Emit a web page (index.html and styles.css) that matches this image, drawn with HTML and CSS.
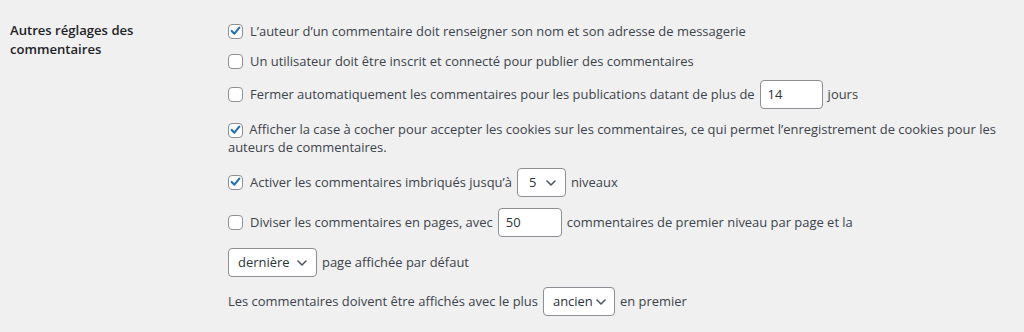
FILE: index.html
```html
<!DOCTYPE html>
<html lang="fr">
<head>
    <meta charset="UTF-8">
    <meta name="viewport" content="width=device-width, initial-scale=1.0">
    <title>Réglages des commentaires</title>
    <link rel="stylesheet" href="styles.css">
</head>
<body>
    <div class="settings">
        <div class="label">Autres réglages des commentaires</div>
        <div class="fields">
            <div class="opt r1">
                <span class="cb checked"><svg viewBox="0 0 14 14" width="14" height="14"><path d="M2.9 7 L5.8 9.9 L11.1 3.3" fill="none" stroke="#2271b1" stroke-width="2.3" stroke-linecap="round" stroke-linejoin="round"/></svg></span>
                L’auteur d’un commentaire doit renseigner son nom et son adresse de messagerie
            </div>
            <div class="opt r2">
                <span class="cb"></span>
                Un utilisateur doit être inscrit et connecté pour publier des commentaires
            </div>
            <div class="opt ctl r3">
                <span class="cb"></span>
                Fermer automatiquement les commentaires pour les publications datant de plus de
                <span class="input w63">14</span>
                jours
            </div>
            <div class="wrap r4">
                <span class="cb checked"><svg viewBox="0 0 14 14" width="14" height="14"><path d="M2.9 7 L5.8 9.9 L11.1 3.3" fill="none" stroke="#2271b1" stroke-width="2.3" stroke-linecap="round" stroke-linejoin="round"/></svg></span>
                Afficher la case à cocher pour accepter les cookies sur les commentaires, ce qui permet l’enregistrement de cookies pour les auteurs de commentaires.
            </div>
            <div class="opt ctl r5">
                <span class="cb checked"><svg viewBox="0 0 14 14" width="14" height="14"><path d="M2.9 7 L5.8 9.9 L11.1 3.3" fill="none" stroke="#2271b1" stroke-width="2.3" stroke-linecap="round" stroke-linejoin="round"/></svg></span>
                Activer les commentaires imbriqués jusqu’à
                <span class="select w49">5<svg class="chev" viewBox="0 0 10 6" width="10" height="6"><path d="M1 1 L5 5 L9 1" fill="none" stroke="#50575e" stroke-width="1.6" stroke-linecap="round" stroke-linejoin="round"/></svg></span>
                niveaux
            </div>
            <div class="opt ctl r6">
                <span class="cb"></span>
                Diviser les commentaires en pages, avec
                <span class="input w64">50</span>
                commentaires de premier niveau par page et la
            </div>
            <div class="opt ctl r7">
                <span class="select w89">dernière<svg class="chev" viewBox="0 0 10 6" width="10" height="6"><path d="M1 1 L5 5 L9 1" fill="none" stroke="#50575e" stroke-width="1.6" stroke-linecap="round" stroke-linejoin="round"/></svg></span>
                page affichée par défaut
            </div>
            <div class="opt ctl r8">
                Les commentaires doivent être affichés avec le plus
                <span class="select w71">ancien<svg class="chev" viewBox="0 0 10 6" width="10" height="6"><path d="M1 1 L5 5 L9 1" fill="none" stroke="#50575e" stroke-width="1.6" stroke-linecap="round" stroke-linejoin="round"/></svg></span>
                en premier
            </div>
        </div>
    </div>
</body>
</html>
```

FILE: styles.css
```css
body {
    margin: 0;
    background: #f0f0f1;
    color: #3c434a;
    font-family: "Open Sans", "Noto Sans", sans-serif;
    font-size: 12.95px;
}
.settings {
    display: grid;
    grid-template-columns: 218px 1fr;
    padding: 21px 14px 0 10px;
}
.label {
    font-weight: 600;
    color: #1d2327;
    font-size: 13.1px;
    line-height: 19px;
    width: 170px;
}
.fields {
    display: flex;
    flex-direction: column;
}
.opt {
    display: flex;
    align-items: center;
    gap: 5px;
    height: 20px;
    white-space: nowrap;
}
.opt.ctl {
    height: 30px;
}
.r1 { margin-bottom: 10px; }
.r2 { margin-bottom: 8px; }
.r3 { margin-bottom: 11px; }
.r4 { margin-bottom: 11px; line-height: 18px; }
.r5 { margin-bottom: 10px; }
.r6 { margin-bottom: 10px; }
.r7 { margin-bottom: 9px; }
.cb {
    display: inline-flex;
    box-sizing: border-box;
    width: 15px;
    height: 15px;
    border: 1px solid #8c8f94;
    border-radius: 4px;
    background: #fff;
    align-items: center;
    justify-content: center;
    margin-right: 2px;
    flex-shrink: 0;
}
.wrap .cb {
    vertical-align: -3px;
    margin-right: 3px;
}
.input, .select {
    display: inline-flex;
    align-items: center;
    box-sizing: border-box;
    height: 29px;
    border: 1px solid #8c8f94;
    border-radius: 4px;
    background: #fff;
    color: #2c3338;
    padding: 0 7px;
    flex-shrink: 0;
}
.select {
    justify-content: space-between;
    padding: 0 9px 0 10px;
}
.chev {
    margin-top: 1px;
    flex-shrink: 0;
}
.w63 { width: 63px; }
.w64 { width: 64px; }
.w49 { width: 49px; padding-left: 11px; }
.w89 { width: 89px; padding-left: 9px; }
.w71 { width: 72px; padding: 0 8px 0 9px; }
```
